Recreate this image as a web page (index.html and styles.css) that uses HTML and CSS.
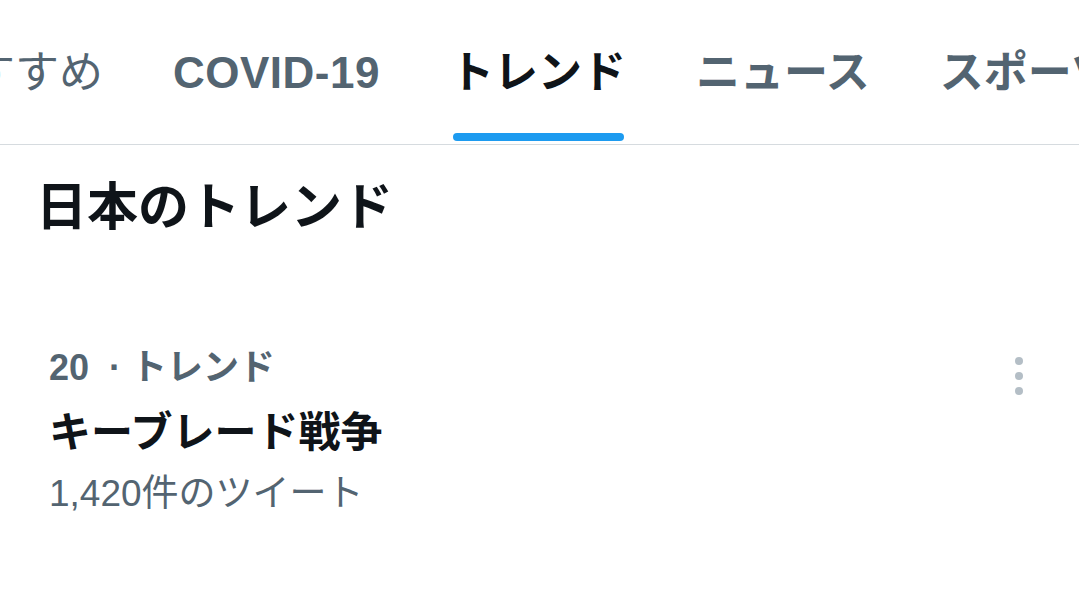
FILE: index.html
```html
<!DOCTYPE html>
<html lang="ja">
<head>
<meta charset="utf-8">
<link rel="stylesheet" href="styles.css">
</head>
<body>
<nav class="tabs">
  <div class="tab"><span class="tab-label">おすすめ</span></div>
  <div class="tab"><span class="tab-label tab-latin">COVID-19</span></div>
  <div class="tab tab-active"><span class="tab-label">トレンド<span class="indicator"></span></span></div>
  <div class="tab"><span class="tab-label">ニュース</span></div>
  <div class="tab"><span class="tab-label">スポーツ</span></div>
</nav>
<h1 class="section-title">日本のトレンド</h1>
<div class="trend">
  <div class="trend-body">
    <div class="trend-meta">20<span class="meta-dot">·</span>トレンド</div>
    <div class="trend-name">キーブレード戦争</div>
    <div class="trend-count">1,420件のツイート</div>
  </div>
  <svg class="kebab" width="10" height="40" viewBox="0 0 10 40">
    <circle cx="5" cy="5" r="4"/>
    <circle cx="5" cy="20" r="4"/>
    <circle cx="5" cy="35" r="4"/>
  </svg>
</div>
</body>
</html>
```

FILE: styles.css
```css
html, body {
  margin: 0;
  padding: 0;
  background: #ffffff;
  overflow: hidden;
}
body {
  font-family: "Liberation Sans", "Noto Sans CJK JP", sans-serif;
  color: #0f1419;
  width: 1079px;
  height: 589px;
}
.tabs {
  display: flex;
  height: 144px;
  border-bottom: 1.5px solid #d6dbdf;
  overflow: hidden;
  white-space: nowrap;
}
.tabs .tab:first-child {
  margin-left: -108px;
}
.tab {
  flex: none;
  display: flex;
  padding: 47px 35px 0;
  font-size: 44px;
  line-height: 52px;
  font-weight: 700;
  color: #536471;
}
.tab:first-child .tab-label {
  font-weight: 400;
}
.tab-label {
  display: flex;
  flex-direction: column;
}
.tab-latin {
  letter-spacing: 0.5px;
}
.tab-active {
  color: #0f1419;
}
.indicator {
  display: block;
  height: 8px;
  margin: 34px 2px 0 3px;
  border-radius: 4px;
  background: #1d9bf0;
}
.section-title {
  margin: 0;
  padding: 32px 0 0 36px;
  font-size: 51px;
  line-height: 62px;
  font-weight: 700;
  color: #0f1419;
}
.trend {
  display: flex;
  justify-content: space-between;
  align-items: flex-start;
  padding: 104px 55px 0 49px;
}
.trend-meta {
  font-size: 36px;
  line-height: 50px;
  font-weight: 700;
  color: #536471;
}
.meta-dot {
  padding: 0 10px 0 20px;
}
.trend-name {
  margin-top: 14px;
  font-size: 42px;
  line-height: 52px;
  font-weight: 700;
  color: #0f1419;
}
.trend-count {
  margin-top: 10px;
  font-size: 37px;
  line-height: 50px;
  font-weight: 400;
  color: #536471;
}
.kebab {
  margin-top: 13px;
  fill: #b4bec6;
}
```
